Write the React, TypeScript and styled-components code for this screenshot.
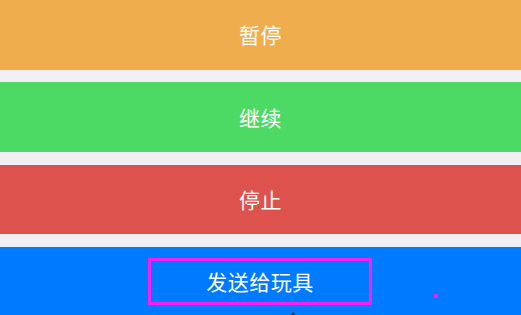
import React from "react";
import styled, { createGlobalStyle } from "styled-components";

const GlobalStyle = createGlobalStyle`
  html, body {
    margin: 0;
    padding: 0;
    background: #efeff4;
    overflow: hidden;
  }
  body {
    font-family: "Noto Sans CJK SC", "Noto Sans", sans-serif;
  }
`;

const tones = {
  warning: "#f0ad4e",
  success: "#4cd964",
  danger: "#dd524d",
  primary: "#007aff",
};

type Tone = keyof typeof tones;

const Panel = styled.div`
  display: flex;
  flex-direction: column;
  gap: 12.7px;
  width: 521px;
`;

const ActionButton = styled.div<{ $tone: Tone }>`
  position: relative;
  display: flex;
  align-items: center;
  justify-content: center;
  height: 69.7px;
  background: ${(p) => tones[p.$tone]};
  color: #ffffff;
  font-size: 21px;
  line-height: 1;
  letter-spacing: 0.5px;
`;

const Outline = styled.div`
  box-sizing: border-box;
  display: flex;
  align-items: center;
  justify-content: center;
  width: 224px;
  height: 47px;
  margin-left: -1px;
  border: 3px solid #fa1ef0;
`;

const Marker = styled.span`
  position: absolute;
  left: 434px;
  top: 47px;
  width: 4px;
  height: 4px;
  background: #fa1ef0;
`;

const Pointer = styled.span`
  position: absolute;
  left: 291px;
  top: 65px;
  width: 0;
  height: 0;
  border-left: 2px solid transparent;
  border-right: 2px solid transparent;
  border-bottom: 3px solid #1a2a40;
`;

type Action = { label: string; tone: Tone };

const actions: Action[] = [
  { label: "暂停", tone: "warning" },
  { label: "继续", tone: "success" },
  { label: "停止", tone: "danger" },
];

export default function App() {
  return (
    <>
      <GlobalStyle />
      <Panel>
        {actions.map((a) => (
          <ActionButton key={a.label} $tone={a.tone}>
            {a.label}
          </ActionButton>
        ))}
        <ActionButton $tone="primary">
          <Outline>发送给玩具</Outline>
          <Marker />
          <Pointer />
        </ActionButton>
      </Panel>
    </>
  );
}
